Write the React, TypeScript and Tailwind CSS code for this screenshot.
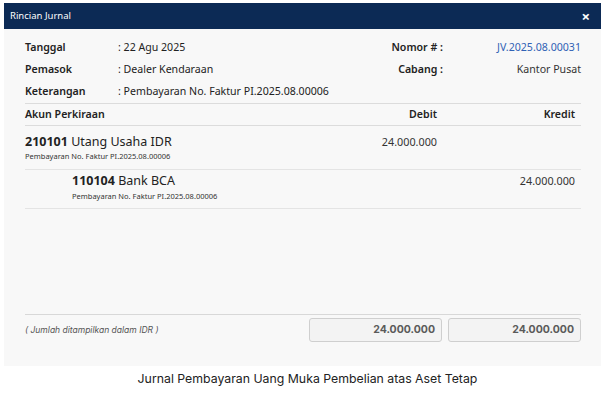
export default function App() {
  const info = [
    { label: "Tanggal", value: "22 Agu 2025", rLabel: "Nomor # :", rValue: "JV.2025.08.00031", blue: true },
    { label: "Pemasok", value: "Dealer Kendaraan", rLabel: "Cabang :", rValue: "Kantor Pusat", blue: false },
    { label: "Keterangan", value: "Pembayaran No. Faktur PI.2025.08.00006", rLabel: "", rValue: "", blue: false },
  ];

  return (
    <div className="w-[615px] h-[394px] bg-white overflow-hidden font-['Noto_Sans',sans-serif]">
      <div className="pt-[3px] pl-[4px] w-[601px]">
        {/* Header */}
        <div className="h-[26px] bg-[#0c2a55] flex items-center justify-between pl-[6px] pr-[11px]">
          <span className="text-white text-[9.5px]">Rincian Jurnal</span>
          <span className="text-white text-[15px] font-bold leading-none">×</span>
        </div>

        {/* Body */}
        <div className="h-[337px] bg-[#f8f8f8] pl-[21px] pr-[20px] pt-[8px] flex flex-col text-[#222]">
          <div className="border-b border-[#dcdcdc]">
            {info.map((r) => (
              <div key={r.label} className="h-[22px] flex items-center text-[10.6px]">
                <span className="w-[93px] font-semibold">{r.label}</span>
                <span className="flex-1">: {r.value}</span>
                {r.rLabel && (
                  <>
                    <span className="font-semibold text-right">{r.rLabel}</span>
                    <span className={`w-[138px] text-right ${r.blue ? "text-[#3162b5]" : "text-[#333]"}`}>{r.rValue}</span>
                  </>
                )}
              </div>
            ))}
          </div>

          {/* Table header */}
          <div className="h-[22px] grid grid-cols-[1fr_140px_140px] items-center text-[10.6px] font-semibold border-b border-[#dcdcdc]">
            <span>Akun Perkiraan</span>
            <span className="text-right pr-[4px]">Debit</span>
            <span className="text-right pr-[6px]">Kredit</span>
          </div>

          {/* Row 1 */}
          <div className="grid grid-cols-[1fr_140px_140px] pt-[8px] pb-[7px] border-b border-[#e4e4e4]">
            <div>
              <div className="text-[12.5px] leading-[16px]">
                <span className="font-bold">210101</span> Utang Usaha IDR
              </div>
              <div className="text-[7.5px] leading-[12px] text-[#333]">Pembayaran No. Faktur PI.2025.08.00006</div>
            </div>
            <span className="text-right pr-[4px] text-[10.8px] leading-[16px] text-[#333]">24.000.000</span>
            <span></span>
          </div>

          {/* Row 2 */}
          <div className="grid grid-cols-[1fr_140px_140px] pt-[3px] pb-[6px] border-b border-[#e4e4e4]">
            <div className="pl-[47px]">
              <div className="text-[12.5px] leading-[16px]">
                <span className="font-bold">110104</span> Bank BCA
              </div>
              <div className="text-[7.5px] leading-[12px] mt-[1px] text-[#333]">Pembayaran No. Faktur PI.2025.08.00006</div>
            </div>
            <span></span>
            <span className="text-right pr-[6px] text-[10.8px] leading-[16px] text-[#333]">24.000.000</span>
          </div>

          <div className="h-[105px]"></div>

          {/* Footer */}
          <div className="border-t border-[#d8d8d8] pt-[3px] flex items-center">
            <span className="flex-1 text-[8.5px] italic text-[#555] font-['Inter',sans-serif]">( Jumlah ditampilkan dalam IDR )</span>
            <div className="w-[133px] h-[24px] border border-[#cfcfcf] rounded-[3px] bg-[#f3f3f3] flex items-center justify-end pr-[6px] text-[10.5px] font-bold text-[#5a5a5a] font-['Inter',sans-serif]">
              24.000.000
            </div>
            <div className="w-[133px] h-[24px] ml-[6px] border border-[#cfcfcf] rounded-[3px] bg-[#f3f3f3] flex items-center justify-end pr-[6px] text-[10.5px] font-bold text-[#5a5a5a] font-['Inter',sans-serif]">
              24.000.000
            </div>
          </div>
        </div>
      </div>

      <div className="mt-[4px] text-center text-[12.3px] text-[#222] font-['Inter',sans-serif]">
        Jurnal Pembayaran Uang Muka Pembelian atas Aset Tetap
      </div>
    </div>
  );
}
